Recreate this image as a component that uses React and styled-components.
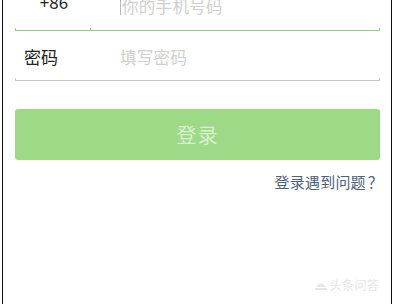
import React from "react";
import styled, { createGlobalStyle } from "styled-components";

const Global = createGlobalStyle`
  html, body { margin: 0; padding: 0; background: #fff; }
  body { font-family: "Noto Sans CJK SC", "Noto Sans", sans-serif; }
`;

const Frame = styled.div`
  position: relative;
  box-sizing: border-box;
  margin-left: 2px;
  width: 390px;
  height: 304px;
  border-left: 1px solid #111;
  border-right: 1px solid #111;
  overflow: hidden;
  background: #fff;
`;

const Form = styled.div`
  display: flex;
  flex-direction: column;
  padding: 0 11px 0 12px;
  margin-top: -19px;
`;

const Field = styled.div`
  display: flex;
  flex-direction: column;
`;

const FieldRow = styled.div`
  display: flex;
  align-items: center;
  height: 47px;
  padding-top: ${(p) => p.$shift || 0}px;
  box-sizing: border-box;
`;

const Label = styled.div`
  width: ${(p) => p.$w}px;
  flex: none;
  box-sizing: border-box;
  text-align: ${(p) => p.$align || "left"};
  padding-left: ${(p) => p.$pl || 0}px;
  margin-bottom: ${(p) => p.$lift || 0}px;
  font-size: 17px;
  color: #222;
  line-height: 20px;
`;

const Placeholder = styled.div`
  display: flex;
  align-items: center;
  margin-left: ${(p) => p.$ml || 0}px;
  margin-bottom: ${(p) => p.$lift || 0}px;
  font-size: 16.5px;
  line-height: 20px;
  color: #cfcfcf;
  letter-spacing: 0.3px;
`;

const Cursor = styled.span`
  width: 1px;
  height: 19px;
  background: #b8b8b8;
  margin-right: 1px;
`;

const Underline = styled.div`
  display: flex;
  height: 3px;
`;

const Segment = styled.div`
  box-sizing: border-box;
  height: 3px;
  border-bottom: 1px solid ${(p) => p.$color};
  border-left: ${(p) => (p.$left ? `1px solid ${p.$color}` : "none")};
  border-right: 1px solid ${(p) => p.$color};
  width: ${(p) => (p.$w ? `${p.$w}px` : "auto")};
  flex: ${(p) => (p.$w ? "none" : "1")};
`;

const Button = styled.div`
  margin-top: 28px;
  height: 51px;
  border-radius: 3px;
  background: #9dd987;
  display: flex;
  align-items: center;
  justify-content: center;
  font-size: 20px;
  color: #d8f1cd;
  letter-spacing: 1px;
`;

const HelpLink = styled.div`
  margin-top: 12px;
  align-self: flex-end;
  margin-right: -3px;
  font-size: 15px;
  line-height: 20px;
  color: #4d607a;
  letter-spacing: 0.2px;
`;

const Question = styled.span`
  margin-left: 2px;
`;

const Watermark = styled.div`
  position: absolute;
  right: 12px;
  bottom: 11px;
  display: flex;
  align-items: center;
  gap: 3px;
  font-size: 12px;
  color: #e6e6e6;
  letter-spacing: 0.3px;
`;

export default function App() {
  return (
    <>
      <Global />
      <Frame>
        <Form>
          <Field>
            <FieldRow $shift={4}>
              <Label $w={78} $align="center" $lift={10}>+86</Label>
              <Placeholder $ml={27} $lift={2}>
                <Cursor />
                你的手机号码
              </Placeholder>
            </FieldRow>
            <Underline>
              <Segment $color="#92d27c" $left $w={76} />
              <Segment $color="#92d27c" />
            </Underline>
          </Field>
          <Field>
            <FieldRow $shift={4}>
              <Label $w={105} $pl={9}>密码</Label>
              <Placeholder>填写密码</Placeholder>
            </FieldRow>
            <Underline>
              <Segment $color="#c9c9c9" $left />
            </Underline>
          </Field>
          <Button>登录</Button>
          <HelpLink>
            登录遇到问题<Question>？</Question>
          </HelpLink>
        </Form>
        <Watermark>
          <svg width="12" height="10" viewBox="0 0 12 10">
            <path d="M1 7 Q6 0 11 7 Z" fill="#e6e6e6" />
            <rect x="0" y="8" width="12" height="2" fill="#e6e6e6" />
          </svg>
          头条问答
        </Watermark>
      </Frame>
    </>
  );
}
